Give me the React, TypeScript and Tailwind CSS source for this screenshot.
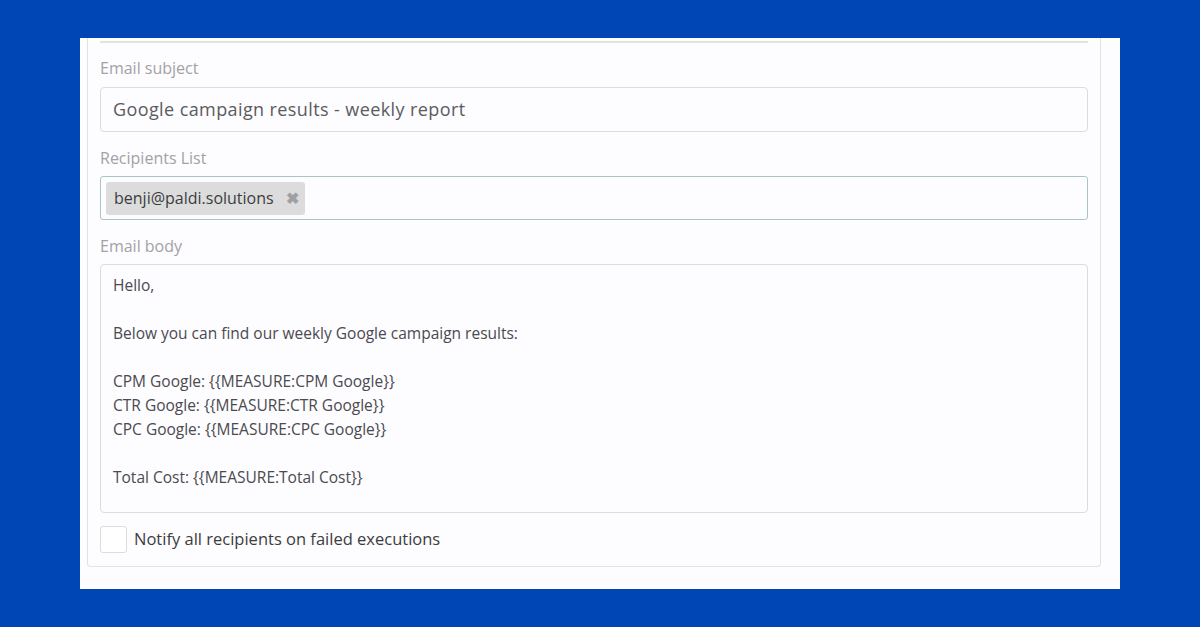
export default function App() {
  const lines = [
    "Hello,",
    "",
    "Below you can find our weekly Google campaign results:",
    "",
    "CPM Google: {{MEASURE:CPM Google}}",
    "CTR Google: {{MEASURE:CTR Google}}",
    "CPC Google: {{MEASURE:CPC Google}}",
    "",
    "Total Cost: {{MEASURE:Total Cost}}",
  ];
  return (
    <div className="w-[1200px] h-[627px] bg-[#0046b4] pt-[38px] px-[80px] overflow-hidden" style={{ fontFamily: "'Open Sans', sans-serif" }}>
      <div className="h-[551px] bg-[#fdfcfe] pl-[7px] pr-[19px]">
        <div className="h-[529px] pt-[3px] border-x border-b border-[#e2e2e4] rounded-b-[4px] px-[12px] flex flex-col">
          <div className="border-t-2 border-[#e2e2e2]" />
          <div className="text-[16px] text-[#a2a2a6] mt-[15px] leading-[20px]">Email subject</div>
          <div className="mt-[9px] h-[45px] border border-[#dcdcde] rounded-[4px] flex items-center px-[12px] text-[18px] tracking-[0.4px] text-[#5b5b60]">
            Google campaign results - weekly report
          </div>
          <div className="text-[16px] text-[#a2a2a6] mt-[16px] leading-[20px]">Recipients List</div>
          <div className="mt-[8px] h-[44px] border border-[#a9c6c6] rounded-[3px] flex items-center px-[5px]">
            <div className="h-[33px] bg-[#dcdcdd] rounded-[3px] flex items-center pl-[8px] pr-[6px] gap-[12px] text-[16px] text-[#3c3c40]">
              benji@paldi.solutions
              <span className="text-[#a0a0a2] text-[16px] font-bold">✖</span>
            </div>
          </div>
          <div className="text-[16px] text-[#a2a2a6] mt-[16px] leading-[20px]">Email body</div>
          <div className="mt-[8px] h-[249px] border border-[#dcdcde] rounded-[4px] px-[12px] pt-[8px] text-[15.5px] text-[#4a4a50] leading-[24px]">
            {lines.map((l, i) => (
              <div key={i} className="h-[24px]">{l}</div>
            ))}
          </div>
          <div className="mt-[13px] flex items-center gap-[7px]">
            <div className="w-[27px] h-[27px] border border-[#dcdcde] rounded-[3px] bg-white" />
            <span className="text-[16.5px] text-[#3c3c40]">Notify all recipients on failed executions</span>
          </div>
        </div>
      </div>
    </div>
  );
}
